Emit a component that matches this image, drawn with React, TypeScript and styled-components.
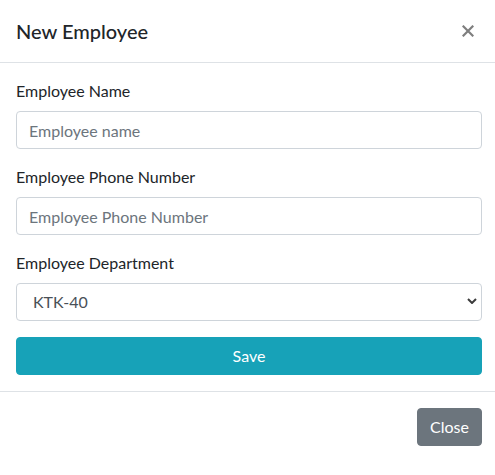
import React from "react";
import styled, { createGlobalStyle } from "styled-components";

const Global = createGlobalStyle`
  html, body { margin: 0; padding: 0; background: #fff; overflow: hidden; }
  body {
    font-family: "Segoe UI", Lato, "Open Sans", sans-serif;
    font-size: 16px;
    line-height: 1.5;
    color: #212529;
  }
  * { box-sizing: border-box; }
`;

const Modal = styled.div`
  width: 498px;
  background: #fff;
`;

const Header = styled.div`
  display: flex;
  align-items: flex-start;
  justify-content: space-between;
  padding: 16px;
  border-bottom: 1px solid #dee2e6;
`;

const Title = styled.h5`
  margin: 0;
  font-size: 20px;
  font-weight: 500;
  line-height: 1.5;
  color: #212529;
`;

const CloseX = styled.button`
  display: flex;
  align-items: center;
  justify-content: center;
  width: 30px;
  height: 30px;
  margin-right: -1px;
  padding: 0;
  border: 0;
  background: transparent;
  opacity: 0.5;
  cursor: pointer;
`;

const Body = styled.div`
  padding: 16px;
`;

const Group = styled.div`
  margin-bottom: 16px;
  position: relative;
`;

const Label = styled.label`
  display: block;
  margin-bottom: 8px;
  font-size: 16px;
  line-height: 24px;
  color: #212529;
`;

const Input = styled.input`
  display: block;
  width: 100%;
  height: 38px;
  padding: 6px 12px;
  font-family: inherit;
  font-size: 16px;
  line-height: 1.5;
  color: #495057;
  background: #fff;
  border: 1px solid #ced4da;
  border-radius: 4px;
  outline: none;
  &::placeholder { color: #6c757d; opacity: 1; }
`;

const SelectWrap = styled.div`
  position: relative;
`;

const Select = styled.select`
  display: block;
  width: 100%;
  height: 38px;
  padding: 6px 12px 6px 16px;
  font-family: inherit;
  font-size: 16px;
  line-height: 1.5;
  color: #495057;
  background: #fff;
  border: 1px solid #ced4da;
  border-radius: 4px;
  outline: none;
  appearance: none;
  -webkit-appearance: none;
`;

const Chevron = styled.svg`
  position: absolute;
  right: 5px;
  top: 15px;
  pointer-events: none;
`;

const Button = styled.button<{ $variant: "info" | "secondary"; $block?: boolean }>`
  display: ${(p) => (p.$block ? "block" : "inline-block")};
  width: ${(p) => (p.$block ? "100%" : "auto")};
  height: 38px;
  padding: 6px 12px;
  font-family: inherit;
  font-size: 16px;
  line-height: 1.5;
  color: #fff;
  background: ${(p) => (p.$variant === "info" ? "#17a2b8" : "#6c757d")};
  border: 1px solid ${(p) => (p.$variant === "info" ? "#17a2b8" : "#6c757d")};
  border-radius: 4px;
  cursor: pointer;
`;

const Footer = styled.div`
  display: flex;
  justify-content: flex-end;
  padding: 12px;
  border-top: 1px solid #dee2e6;
  & > * { margin: 4px; }
`;

export default function App() {
  return (
    <>
      <Global />
      <Modal>
        <Header>
          <Title>New Employee</Title>
          <CloseX aria-label="Close">
            <svg width="12" height="12" viewBox="0 0 12 12">
              <path d="M1.5 1.5 L10.5 10.5 M10.5 1.5 L1.5 10.5" stroke="#000" strokeWidth="2.2" strokeLinecap="square" />
            </svg>
          </CloseX>
        </Header>
        <Body>
          <Group>
            <Label>Employee Name</Label>
            <Input placeholder="Employee name" />
          </Group>
          <Group>
            <Label>Employee Phone Number</Label>
            <Input placeholder="Employee Phone Number" />
          </Group>
          <Group>
            <Label>Employee Department</Label>
            <SelectWrap>
              <Select defaultValue="KTK-40">
                <option value="KTK-40">KTK-40</option>
              </Select>
              <Chevron width="10" height="6" viewBox="0 0 10 6">
                <path d="M1 1 L5 5 L9 1" fill="none" stroke="#3c3c3c" strokeWidth="2" />
              </Chevron>
            </SelectWrap>
          </Group>
          <Button $variant="info" $block>Save</Button>
        </Body>
        <Footer>
          <Button $variant="secondary">Close</Button>
        </Footer>
      </Modal>
    </>
  );
}
